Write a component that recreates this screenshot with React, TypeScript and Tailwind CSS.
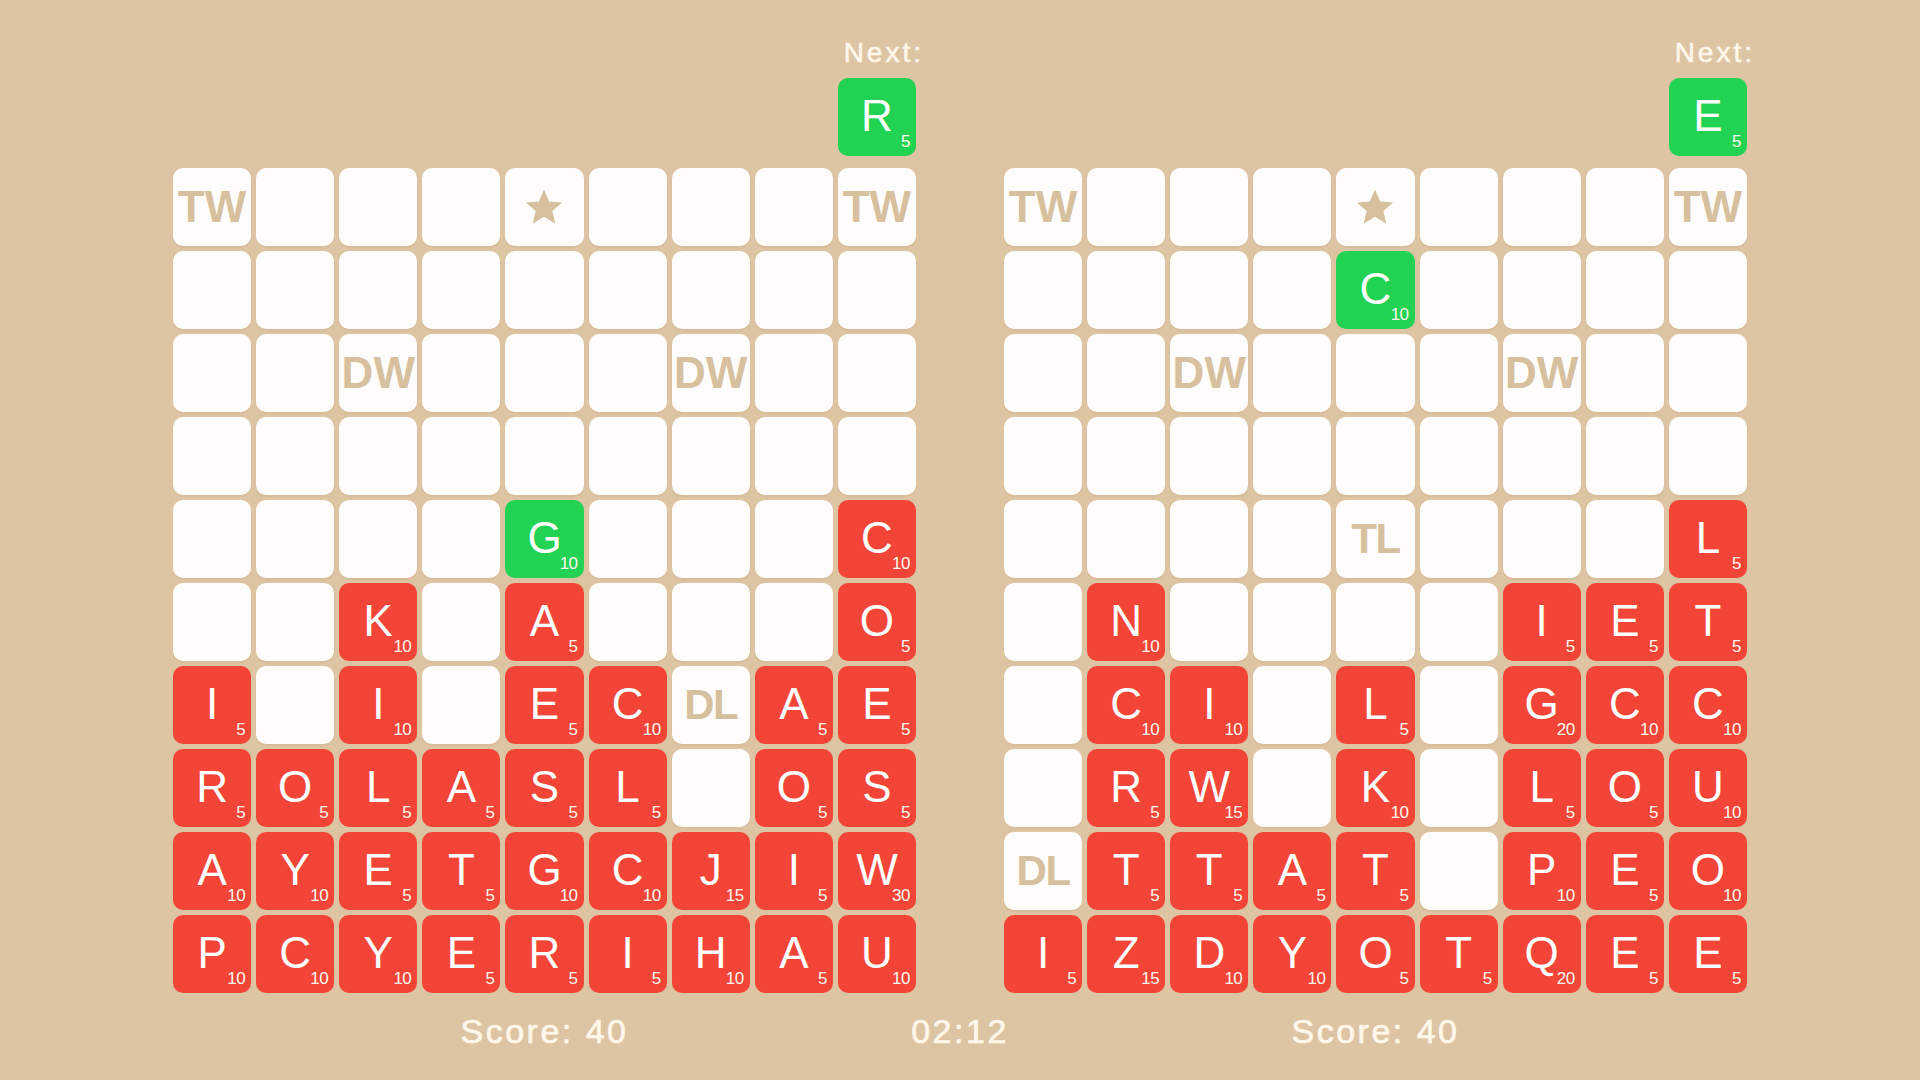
const LEFT = [
  "TW . . . * . . . TW",
  ". . . . . . . . .",
  ". . DW . . . DW . .",
  ". . . . . . . . .",
  ". . . . G10g . . . C10",
  ". . K10 . A5 . . . O5",
  "I5 . I10 . E5 C10 DL A5 E5",
  "R5 O5 L5 A5 S5 L5 . O5 S5",
  "A10 Y10 E5 T5 G10 C10 J15 I5 W30",
  "P10 C10 Y10 E5 R5 I5 H10 A5 U10",
];

const RIGHT = [
  "TW . . . * . . . TW",
  ". . . . C10g . . . .",
  ". . DW . . . DW . .",
  ". . . . . . . . .",
  ". . . . TL . . . L5",
  ". N10 . . . . I5 E5 T5",
  ". C10 I10 . L5 . G20 C10 C10",
  ". R5 W15 . K10 . L5 O5 U10",
  "DL T5 T5 A5 T5 . P10 E5 O10",
  "I5 Z15 D10 Y10 O5 T5 Q20 E5 E5",
];

const font = { fontFamily: '"Liberation Sans", Arial, sans-serif' };

function Tile(props: { letter: string; points: string; green?: boolean }) {
  return (
    <div
      className={`relative flex h-[78px] items-center justify-center rounded-[10px] ${
        props.green ? "bg-[#22d353]" : "bg-[#f34537]"
      }`}
    >
      <span className="mt-[-3px] text-[44px] leading-none text-white">{props.letter}</span>
      <span className="absolute right-[6px] bottom-[6px] text-[17px] leading-none tracking-[-0.5px] text-[#fff6ee]">
        {props.points}
      </span>
    </div>
  );
}

function Star() {
  return (
    <svg width="40" height="40" viewBox="0 0 24 24" className="fill-[#d6c09e]">
      <path d="M12 1.5l3.1 7.2 7.8.6-5.9 5.1 1.8 7.6L12 17.9 5.2 22l1.8-7.6L1.1 9.3l7.8-.6z" />
    </svg>
  );
}

function Cell(props: { token: string }) {
  const t = props.token;
  const m = t.match(/^([A-Z])(\d+)(g?)$/);
  if (m) return <Tile letter={m[1]} points={m[2]} green={m[3] === "g"} />;
  return (
    <div className="flex h-[78px] items-center justify-center rounded-[10px] bg-[#fffdfb] shadow-[0_2px_1px_rgba(160,120,70,0.08)]">
      {t === "*" && <Star />}
      {(t === "TW" || t === "DW") && (
        <span className="text-[44px] font-bold leading-none text-[#d6c09e]">{t}</span>
      )}
      {(t === "DL" || t === "TL") && (
        <span className="text-[42px] font-bold leading-none tracking-[-1.5px] text-[#d6c09e]">{t}</span>
      )}
    </div>
  );
}

function Board(props: { rows: string[]; next: string; nextPts: string }) {
  return (
    <div className="flex w-[743px] flex-col">
      <div className="mr-[-8px] self-end text-[28px] leading-[32px] tracking-[3px] text-[#fff7ea] [-webkit-text-stroke:0.6px_#fff7ea]">
        Next:
      </div>
      <div className="mt-[9px] w-[78px] self-end">
        <Tile letter={props.next} points={props.nextPts} green />
      </div>
      <div className="mt-[12px] grid grid-cols-9 gap-[5px]">
        {props.rows.flatMap((row, r) =>
          row.split(" ").map((tok, c) => <Cell key={`${r}-${c}`} token={tok} />)
        )}
      </div>
    </div>
  );
}

export default function App() {
  return (
    <div className="h-[1080px] w-[1920px] overflow-hidden bg-[#ddc4a2]" style={font}>
      <div className="flex justify-center gap-[88px] pt-[37px]">
        <Board rows={LEFT} next="R" nextPts="5" />
        <Board rows={RIGHT} next="E" nextPts="5" />
      </div>
      <div className="mt-[18px] grid grid-cols-[743px_88px_743px] justify-center text-[34px] leading-[40px] tracking-[2.5px] text-[#fff7ea] [-webkit-text-stroke:0.7px_#fff7ea]">
        <div className="text-center">Score: 40</div>
        <div className="flex justify-center whitespace-nowrap">02:12</div>
        <div className="text-center">Score: 40</div>
      </div>
    </div>
  );
}
